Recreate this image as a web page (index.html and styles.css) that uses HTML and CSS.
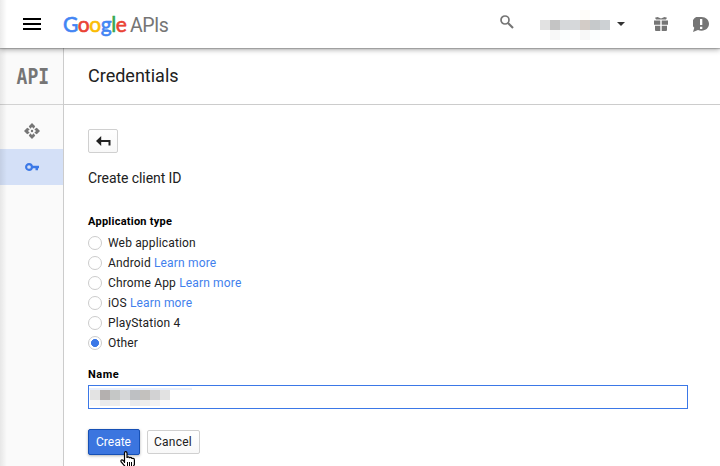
FILE: index.html
```html
<!DOCTYPE html>
<html lang="en">
<head>
<meta charset="utf-8">
<title>Credentials</title>
<link rel="stylesheet" href="styles.css">
</head>
<body>
<header class="topbar">
  <div class="menu"><i></i><i></i><i></i></div>
  <div class="brand"><span class="google"><span class="b">G</span><span class="r">o</span><span class="y">o</span><span class="b">g</span><span class="g">l</span><span class="r">e</span></span><span class="apis">APIs</span></div>
  <svg class="search" width="14" height="14" viewBox="0 0 14 14"><circle cx="5" cy="5" r="4" fill="none" stroke="#757575" stroke-width="1.7"/><path d="M8 8L13 13" stroke="#757575" stroke-width="2.1"/></svg>
  <svg class="account" width="70" height="30" viewBox="0 0 70 30" shape-rendering="crispEdges"><path fill="#fefcf9" d="M40 0h10v10H40z"/><path fill="#e2e2e2" d="M0 10h10v10H0z"/><path fill="#c4c4c4" d="M10 10h10v10H10z"/><path fill="#d6d8da" d="M20 10h20v10H20z"/><path fill="#d3ccc7" d="M40 10h10v10H40z"/><path fill="#c6c9cb" d="M50 10h10v10H50z"/><path fill="#cdd1d4" d="M60 10h10v10H60z"/><path fill="#f8f8f8" d="M10 20h10v10H10zM40 20h10v10H40z"/><path fill="#fbfefe" d="M20 20h10v10H20zM50 20h10v10H50z"/></svg>
  <svg class="caret" width="8" height="4" viewBox="0 0 8 4"><path d="M0 0h8L4 4z" fill="#333"/></svg>
  <svg class="gift" width="14" height="14" viewBox="0 0 14 14"><path fill="#757575" d="M1 .8L3.500 0 7 1.400 10.500 0 13 .8 12 2.500H2zM0 3.500h6.300v4.300H0zM7.700 3.500H14v4.300H7.700zM1 8.800h5.300V14H2Q1 14 1 13zM7.700 8.800H13V13q0 1-1 1H7.700z"/></svg>
  <svg class="feedback" width="17" height="15" viewBox="0 0 17 15"><path fill="#757575" d="M0 15L1.300 10.800A7 6.500 0 0 1 8.500 0C13 0 16 3 16 6.800S13 13.700 8.500 13.700Q6.500 13.700 5 13z"/><path fill="#fff" d="M7 2h2.300v6H7zM7 9.700h2.300V12H7z"/></svg>
</header>
<div class="shell">
  <nav class="side">
    <div class="product"><span>API</span></div>
    <div class="item first"><svg width="16" height="16" viewBox="0 0 16 16"><path fill="#757575" d="M8 0L11.200 3.200 9.700 5.700 8 4 6.300 5.700 4.800 3.200zM16 8L12.800 11.200 10.300 9.700 12 8 10.300 6.300 12.800 4.800zM8 16L4.800 12.800 6.300 10.300 8 12 9.700 10.300 11.200 12.800zM0 8L3.200 4.800 5.700 6.300 4 8 5.700 9.700 3.200 11.200z"/><circle cx="8" cy="8" r="1.200" fill="#757575"/></svg></div>
    <div class="item active"><svg width="14" height="8" viewBox="0 0 14 8"><circle cx="4" cy="4" r="2.900" fill="none" stroke="#3b78e7" stroke-width="2.100"/><path fill="#3b78e7" d="M7 2.700h7v2.500h-1V7.200h-2.500V5.200H7z"/></svg></div>
  </nav>
  <main class="main">
    <h1 class="title">Credentials</h1>
    <div class="content">
      <div class="btn back"><svg width="15" height="11" viewBox="0 0 15 11"><path fill="#212121" d="M0 5L5.200 0V3.900H14.500V9.500H12.500V6H5.200V10z"/></svg></div>
      <h2 class="subtitle">Create client ID</h2>
      <div class="label">Application type</div>
      <div class="options">
        <div class="option"><i class="radio"></i><span>Web application</span></div>
        <div class="option"><i class="radio"></i><span>Android <a>Learn more</a></span></div>
        <div class="option"><i class="radio"></i><span>Chrome App <a>Learn more</a></span></div>
        <div class="option"><i class="radio"></i><span>iOS <a>Learn more</a></span></div>
        <div class="option"><i class="radio"></i><span>PlayStation 4</span></div>
        <div class="option"><i class="radio on"></i><span>Other</span></div>
      </div>
      <div class="label name">Name</div>
      <div class="field"><svg width="103" height="18" viewBox="0 0 103 18" shape-rendering="crispEdges"><path fill="#e8effc" d="M0 0h103v2H0z"/><path fill="#e3e3e3" d="M1 2h10v10H1z"/><path fill="#b4b0af" d="M11 2h10v10H11z"/><path fill="#c5c7c6" d="M21 2h10v10H21z"/><path fill="#d4d6d8" d="M31 2h10v10H31z"/><path fill="#bec0c3" d="M41 2h10v10H41z"/><path fill="#c3c1be" d="M51 2h10v10H51z"/><path fill="#d2d2d3" d="M61 2h10v10H61z"/><path fill="#e2e2e2" d="M71 2h10v10H71z"/><path fill="#f8f8f7" d="M1 12h10v6H1zM31 12h10v6H31z"/><path fill="#e8eaec" d="M11 12h10v6H11zM41 12h10v6H41z"/><path fill="#ededec" d="M21 12h10v6H21zM51 12h10v6H51z"/><path fill="#f2f2f2" d="M61 12h10v6H61z"/><path fill="#fafafa" d="M71 12h10v6H71z"/></svg></div>
      <div class="actions"><div class="btn primary">Create</div><div class="btn cancel">Cancel</div></div>
    </div>
  </main>
</div>
<svg class="cursor" width="16" height="19" viewBox="0 0 16 19"><path fill="#fff" stroke="#000" stroke-width="1.200" d="M4.500 12V2Q4.500.7 5.700.7T7 2V7Q7 5.800 8.200 5.800T9.500 7.300Q9.500 6.300 10.700 6.300T12 8Q12 7.300 13.200 7.300T14.400 9V13.500L13 16V18.400H6V16.500L1 10.700Q.7 8.800 2 8.800 3 8.800 4.500 11"/><path stroke="#000" d="M7.500 11v4M9.500 11v4M11.500 11v4"/></svg>
</body>
</html>
```
FILE: styles.css
```css
* { box-sizing: border-box; }
body {
  margin: 0;
  width: 720px;
  height: 466px;
  overflow: hidden;
  position: relative;
  background: #fff;
  color: #212121;
  font-family: Roboto, "Liberation Sans", sans-serif;
  font-size: 12px;
}
body::after {
  content: "";
  position: absolute;
  z-index: 2;
  inset: 0 auto 0 0;
  width: 7px;
  background: linear-gradient(90deg, rgba(0,0,0,.08), transparent);
}
svg { display: block; flex: none; }
.topbar {
  position: relative;
  z-index: 1;
  display: flex;
  align-items: flex-start;
  height: 48px;
  padding-left: 23px;
  background: #fff;
  box-shadow: 0 1px 1px rgba(0,0,0,.2), 0 2px 5px rgba(0,0,0,.3);
}
.menu { display: grid; gap: 3px; width: 18px; margin-top: 18px; }
.menu i { height: 2px; margin-right: 0; background: #000; }
.brand { display: flex; align-items: baseline; width: 110px; margin: 12px 0 0 23px; line-height: 24px; white-space: nowrap; }
.google { width: 66px; margin-left: -1px; font-family: Lato, sans-serif; font-size: 21px; font-weight: 400; letter-spacing: -.45px; -webkit-text-stroke: .6px; }
.apis { margin-left: 1px; font-family: Roboto, sans-serif; font-size: 19.5px; color: #757575; letter-spacing: -.5px; }
.b { color: #4285f4; }
.r { color: #ea4335; }
.y { color: #fbbc05; }
.g { color: #34a853; }
.search { margin: 15px 0 0 326px; }
.account { margin: 10px 0 0 26px; }
.caret { margin: 22px 0 0 7px; }
.gift { margin: 17px 0 0 29px; }
.feedback { margin: 17px 0 0 25px; }
.shell { display: flex; height: 418px; }
.side { width: 64px; border-right: 1px solid #ccc; background: #fafafa; }
.product { display: flex; align-items: center; justify-content: center; height: 57px; padding: 1px 0 0 2px; border-bottom: 1px solid #d2d2d2; color: #757575; }
.product span { font: 700 22px/24px "DejaVu Sans Mono", monospace; transform: scaleX(.82); }
.item { display: flex; align-items: center; justify-content: center; height: 36px; }
.first { margin-top: 8px; }
.active { background: #d4e0f7; }
.main { flex: 1; }
.title { height: 57px; margin: 0; padding-left: 24px; border-bottom: 1px solid #ccc; font-size: 18px; font-weight: 400; line-height: 55px; }
.content { padding: 24px 32px 0 24px; }
.btn { display: flex; align-items: center; justify-content: center; height: 24px; border: 1px solid #d0d0d0; border-radius: 2px; background: linear-gradient(#fff, #f8f8f8); }
.back { width: 30px; }
.subtitle { margin: 15px 0 0; font-size: 14px; font-weight: 400; line-height: 20px; letter-spacing: -.07px; }
.label { margin-top: 26px; font-size: 11px; font-weight: 700; line-height: 16px; letter-spacing: .25px; color: #000; }
.options { margin-top: 3px; }
.option { display: flex; align-items: center; gap: 6px; height: 20px; letter-spacing: .16px; }
.option a { color: #427fed; }
.radio { width: 14px; height: 14px; border: 1px solid #ccc; border-radius: 50%; }
.on { background: radial-gradient(circle, #3b78e7 3.700px, transparent 4.300px); }
.name { margin-top: 14px; letter-spacing: .5px; }
.field { height: 24px; margin-top: 2px; padding-top: 2px; border: 1px solid #3b78e7; }
.actions { display: flex; align-items: center; gap: 7px; margin-top: 20px; }
.primary { width: 52px; height: 26px; padding-right: 1px; border-color: #1650b5; background: #3b75df; color: #fff; box-shadow: 0 1px 3px rgba(0,0,0,.3); }
.cancel { width: 53px; padding-right: 1px; letter-spacing: .25px; }
.cursor { position: absolute; left: 120px; top: 451px; }
```
